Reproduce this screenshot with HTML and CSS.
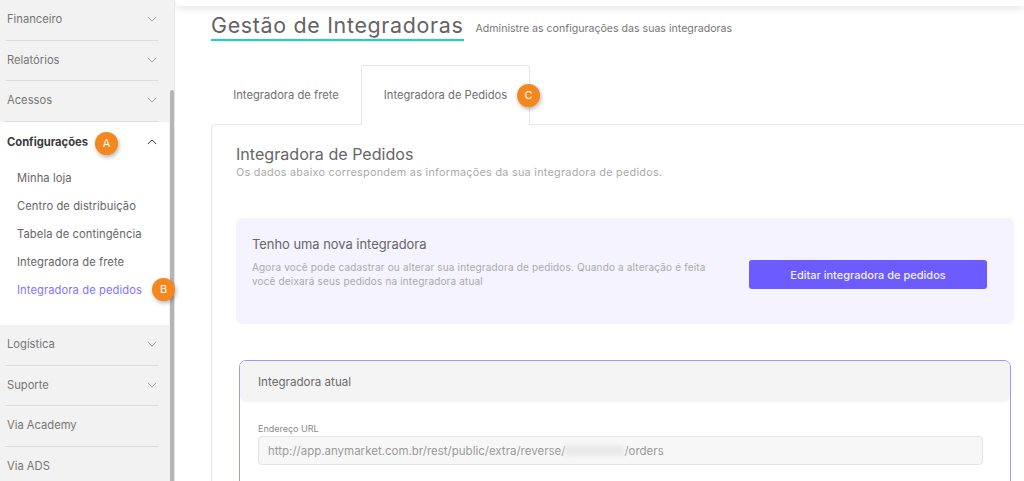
FILE: index.html
```html
<!DOCTYPE html>
<html lang="pt-BR">
<head>
<meta charset="utf-8">
<title>Gestão de Integradoras</title>
<link rel="stylesheet" href="styles.css">
</head>
<body>
<div class="app">
  <aside class="sidebar">
    <div class="item"><span>Financeiro</span><svg class="chev" viewBox="0 0 12 7"><path d="M1 1l5 5 5-5"/></svg></div>
    <div class="item"><span>Relatórios</span><svg class="chev" viewBox="0 0 12 7"><path d="M1 1l5 5 5-5"/></svg></div>
    <div class="item"><span>Acessos</span><svg class="chev" viewBox="0 0 12 7"><path d="M1 1l5 5 5-5"/></svg></div>
    <section class="open">
      <div class="open-head"><strong>Configurações</strong><svg class="chev up" viewBox="0 0 12 7"><path d="M1 6l5-5 5 5"/></svg><span class="badge badge-a">A</span></div>
      <a class="sub">Minha loja</a>
      <a class="sub">Centro de distribuição</a>
      <a class="sub">Tabela de contingência</a>
      <a class="sub">Integradora de frete</a>
      <a class="sub active">Integradora de pedidos<span class="badge badge-b">B</span></a>
    </section>
    <div class="item"><span>Logística</span><svg class="chev" viewBox="0 0 12 7"><path d="M1 1l5 5 5-5"/></svg></div>
    <div class="item"><span>Suporte</span><svg class="chev" viewBox="0 0 12 7"><path d="M1 1l5 5 5-5"/></svg></div>
    <div class="item"><span>Via Academy</span></div>
    <div class="item last"><span>Via ADS</span></div>
    <div class="scrollbar"></div>
  </aside>
  <main class="main">
    <div class="topbar"></div>
    <header class="title-row">
      <h1>Gestão de Integradoras</h1>
      <p>Administre as configurações das suas integradoras</p>
    </header>
    <nav class="tabs">
      <div class="tab">Integradora de frete</div>
      <div class="tab current">Integradora de Pedidos<span class="badge badge-c">C</span></div>
    </nav>
    <section class="panel">
      <h2>Integradora de Pedidos</h2>
      <p class="lead">Os dados abaixo correspondem as informações da sua integradora de pedidos.</p>
      <div class="notice">
        <div class="notice-text">
          <h3>Tenho uma nova integradora</h3>
          <p>Agora você pode cadastrar ou alterar sua integradora de pedidos. Quando a alteração é feita você deixará seus pedidos na integradora atual</p>
        </div>
        <button class="btn">Editar integradora de pedidos</button>
      </div>
      <div class="current-box">
        <div class="box-head">Integradora atual</div>
        <div class="box-body">
          <label class="field-label">Endereço URL</label>
          <div class="input">http://app.anymarket.com.br/rest/public/extra/reverse/<span class="blur"></span>/orders</div>
        </div>
      </div>
    </section>
  </main>
</div>
</body>
</html>
```
FILE: styles.css
```css
* { box-sizing: border-box; }
html, body { margin: 0; height: 481px; overflow: hidden; background: #fff; }
body { font-family: "Inter", "Liberation Sans", sans-serif; color: #666; }
.app { display: flex; height: 481px; overflow: hidden; }

.sidebar { position: relative; flex: 0 0 175px; width: 175px; height: 481px; background: #f2f2f2; border-right: 1px solid #e6e6e6; padding-right: 5px; }
.item { height: 40.5px; margin: 0 11px 0 5px; padding: 0 1px 1px 2px; display: flex; align-items: center; justify-content: space-between; font-size: 11.2px; color: #757575; border-bottom: 1px solid #dcdcdc; }
.item.last { border-bottom: 0; }
.chev { width: 10px; height: 6px; fill: none; stroke: #8f8f8f; stroke-width: 1; overflow: visible; }
.chev.up { stroke: #333; stroke-width: 1.2; }
.open { background: #fff; height: 203.5px; padding: 0 0 0 7px; }
.open-head { position: relative; height: 40px; display: flex; align-items: center; justify-content: space-between; padding-right: 12px; font-size: 11.2px; color: #3a3a3a; }
.open-head strong { font-weight: 700; }
.sub { position: relative; display: block; height: 28px; line-height: 28px; padding-left: 10px; font-size: 11.2px; letter-spacing: .08px; color: #666; white-space: nowrap; }
.open-head + .sub { margin-top: 2.5px; }
.sub.active { color: #8475ff; }
.scrollbar { position: absolute; top: 90px; left: 170px; width: 4px; height: 391px; background: #b5b5b5; border-radius: 2px 2px 0 0; }

.badge { position: absolute; width: 23px; height: 23px; border-radius: 50%; background: #f5871f; color: #fff; font-size: 11px; letter-spacing: 0; line-height: 23px; text-align: center; box-shadow: 1px 2px 4px rgba(0,0,0,.3); z-index: 2; }
.badge-a { left: 88px; top: 10.5px; }
.badge-b { left: 145px; top: 2px; }
.badge-c { left: 155px; top: 18px; }

.main { flex: 1; min-width: 0; padding: 0 0 0 36px; }
.topbar { height: 6px; margin-left: -36px; background: #fff; border-radius: 0 0 0 6px; box-shadow: 0 1px 8px rgba(0,0,0,.16); }
.title-row { display: flex; align-items: flex-end; gap: 12px; margin-top: 6px; height: 29px; }
h1 { margin: 0; font-size: 21.4px; font-weight: 400; line-height: 26px; height: 29px; color: #636363; letter-spacing: .69px; border-bottom: 2px solid #14d6c5; white-space: nowrap; }
.title-row p { margin: 0 0 6px; font-size: 10.6px; color: #777; white-space: nowrap; }

.tabs { display: flex; margin-top: 24px; height: 60px; position: relative; z-index: 1; }
.tab { width: 150px; height: 60px; display: flex; align-items: center; justify-content: center; font-size: 11.2px; color: #707070; }
.tab.current { position: relative; width: 169px; background: #fff; border: 1px solid #e6e6e6; border-bottom: 0; border-radius: 3px 3px 0 0; padding-bottom: 2px; }

.panel { margin-top: -1px; height: 400px; margin-right: -20px; border: 1px solid #e6e6e6; border-radius: 4px 0 0 0; padding: 19px 0 0 24px; }
h2 { margin: 0; font-size: 16.1px; font-weight: 400; line-height: 20px; color: #666; white-space: nowrap; }
.lead { margin: 1px 0 0; font-size: 10.8px; letter-spacing: .28px; line-height: 15px; color: #aaa; white-space: nowrap; }
.notice { margin-top: 38px; width: 778px; height: 106px; background: #f5f3ff; border-radius: 6px; padding: 18px 27px 0 16px; display: flex; align-items: flex-start; justify-content: space-between; }
.notice-text { width: 476px; }
h3 { margin: 0 0 6px; font-size: 12.9px; font-weight: 400; line-height: 18px; color: #666; }
.notice-text p { margin: 0; font-size: 10px; letter-spacing: .16px; line-height: 14px; color: #aaa; }
.btn { flex: none; width: 238px; height: 29px; border: 0; border-radius: 3px; background: #6c5bff; color: #f2efff; font: 500 11px "Inter", "Liberation Sans", sans-serif; margin-top: 24px; }
.current-box { margin: 36px 0 0 3px; width: 772px; height: 140px; border: 1px solid #a395ff; border-radius: 7px; }
.box-head { height: 41px; background: #f4f4f4; border-radius: 6px; padding: 0 18px; display: flex; align-items: center; font-size: 11.6px; color: #6a6a6a; }
.box-body { padding: 21px 27px 0 18px; }
.field-label { display: block; font-size: 9px; line-height: 12px; color: #8a8a8a; }
.input { margin-top: 1px; height: 29px; background: #f7f7f7; border: 1px solid #e4e4e4; border-radius: 4px; padding: 0 9px; display: flex; align-items: center; font-size: 11.5px; color: #9a9a9a; white-space: nowrap; }
.blur { display: inline-block; width: 59px; height: 11px; background: #e9e9e9; filter: blur(2px); }
```
